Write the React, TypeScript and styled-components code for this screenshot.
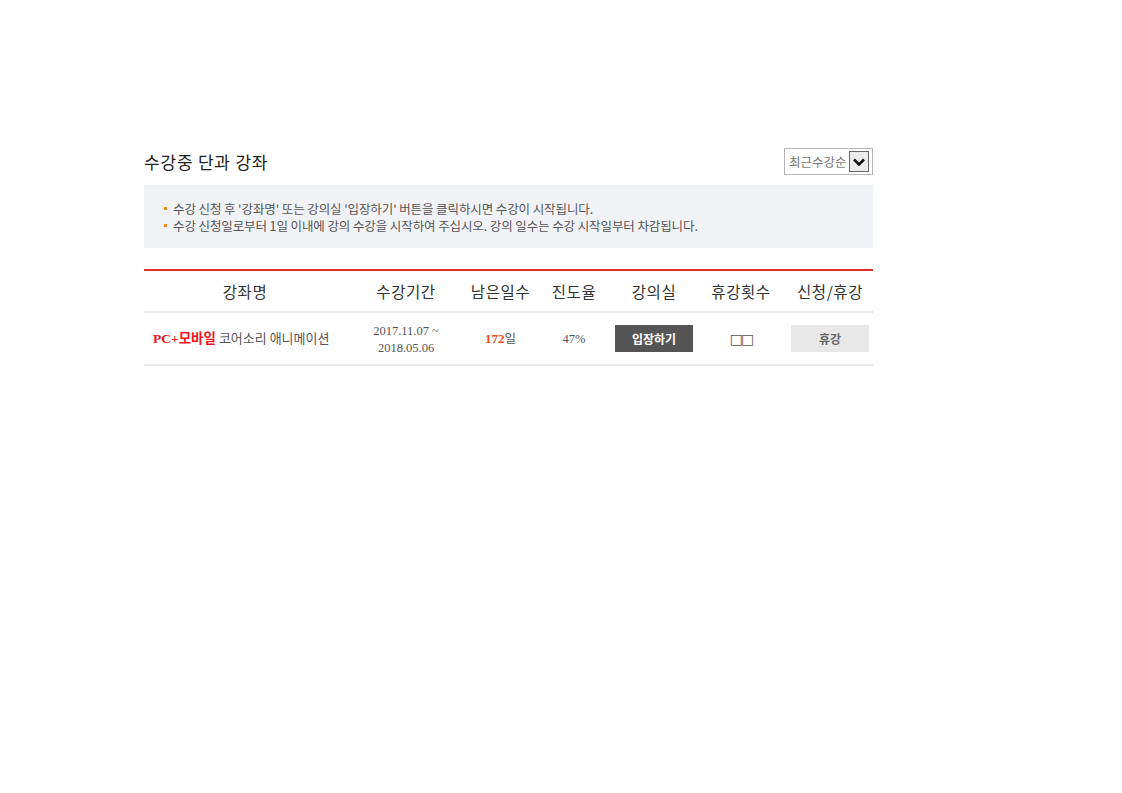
import { createGlobalStyle, styled } from "styled-components";

const GlobalStyle = createGlobalStyle`
  html, body {
    margin: 0;
    padding: 0;
    background: #fff;
  }
  body {
    font-family: "Noto Sans CJK KR", "Noto Sans", sans-serif;
  }
`;

type Course = {
  device: string;
  title: string;
  start: string;
  end: string;
  daysLeft: number;
  progress: string;
};

const courses: Course[] = [
  {
    device: "PC+모바일",
    title: "코어소리 애니메이션",
    start: "2017.11.07 ~",
    end: "2018.05.06",
    daysLeft: 172,
    progress: "47%",
  },
];

const columns = [
  { label: "강좌명", width: 202 },
  { label: "수강기간", width: 120 },
  { label: "남은일수", width: 69 },
  { label: "진도율", width: 78 },
  { label: "강의실", width: 82 },
  { label: "휴강횟수", width: 92 },
  { label: "신청/휴강", width: 86 },
];

export default function App() {
  return (
    <>
      <GlobalStyle />
      <Page>
        <TitleBar>
          <Title>수강중 단과 강좌</Title>
          <SortSelect>
            <SortLabel>최근수강순</SortLabel>
            <SortArrow>
              <svg width="14" height="10" viewBox="0 0 14 10">
                <path
                  d="M2 2.5 L7 7.5 L12 2.5"
                  fill="none"
                  stroke="#111"
                  strokeWidth="2.6"
                />
              </svg>
            </SortArrow>
          </SortSelect>
        </TitleBar>
        <Notice>
          <NoticeItem>수강 신청 후 '강좌명' 또는 강의실 '입장하기' 버튼을 클릭하시면 수강이 시작됩니다.</NoticeItem>
          <NoticeItem>수강 신청일로부터 1일 이내에 강의 수강을 시작하여 주십시오. 강의 일수는 수강 시작일부터 차감됩니다.</NoticeItem>
        </Notice>
        <Table>
          <colgroup>
            {columns.map((c) => (
              <col key={c.label} style={{ width: c.width }} />
            ))}
          </colgroup>
          <thead>
            <tr>
              {columns.map((c) => (
                <HeadCell key={c.label}>{c.label}</HeadCell>
              ))}
            </tr>
          </thead>
          <tbody>
            {courses.map((course) => (
              <tr key={course.title}>
                <NameCell>
                  <Device>{course.device}</Device> {course.title}
                </NameCell>
                <Cell>
                  <SerifText>
                    {course.start}
                    <br />
                    {course.end}
                  </SerifText>
                </Cell>
                <Cell>
                  <DaysLeft>{course.daysLeft}</DaysLeft>
                  <DayUnit>일</DayUnit>
                </Cell>
                <Cell>
                  <SerifText>{course.progress}</SerifText>
                </Cell>
                <Cell>
                  <EnterButton>입장하기</EnterButton>
                </Cell>
                <Cell>
                  <Missing>□□</Missing>
                </Cell>
                <Cell>
                  <PauseButton>휴강</PauseButton>
                </Cell>
              </tr>
            ))}
          </tbody>
        </Table>
      </Page>
    </>
  );
}

const Page = styled.div`
  width: 729px;
  margin-left: 144px;
  padding-top: 148px;
`;

const TitleBar = styled.div`
  display: flex;
  align-items: center;
  justify-content: space-between;
  height: 27px;
`;

const Title = styled.h2`
  margin: 0;
  font-size: 17px;
  font-weight: 400;
  color: #222;
  letter-spacing: 0.8px;
`;

const SortSelect = styled.div`
  display: flex;
  align-items: center;
  box-sizing: border-box;
  width: 89px;
  height: 27px;
  border: 1px solid #b5b5b5;
  padding: 0 1px 0 4px;
  gap: 2px;
`;

const SortLabel = styled.span`
  font-size: 12.5px;
  color: #777;
  white-space: nowrap;
`;

const SortArrow = styled.span`
  display: flex;
  align-items: center;
  justify-content: center;
  box-sizing: border-box;
  width: 20px;
  height: 21px;
  border: 1px solid #666;
  background: #ececec;
`;

const Notice = styled.ul`
  list-style: none;
  margin: 10px 0 0;
  padding: 15px 0 12px 19px;
  background: #f1f2f5;
  height: 63px;
  box-sizing: border-box;
`;

const NoticeItem = styled.li`
  position: relative;
  padding-left: 10px;
  font-size: 12.5px;
  line-height: 17px;
  color: #555;
  letter-spacing: -0.1px;

  &::before {
    content: "";
    position: absolute;
    left: 1px;
    top: 7px;
    width: 3px;
    height: 3px;
    background: #f08c1c;
  }
`;

const Table = styled.table`
  width: 729px;
  margin-top: 21px;
  border-collapse: collapse;
  table-layout: fixed;
  border-top: 2px solid #e42a2e;
`;

const HeadCell = styled.th`
  height: 40px;
  padding: 0;
  font-size: 15.5px;
  font-weight: 400;
  color: #333;
  text-align: center;
  border-bottom: 2px solid #e8e8e8;
  letter-spacing: 0.6px;
`;

const Cell = styled.td`
  height: 51px;
  padding: 0;
  text-align: center;
  vertical-align: middle;
  border-bottom: 2px solid #e8e8e8;
  font-size: 12.5px;
  line-height: 16px;
`;

const NameCell = styled(Cell)`
  text-align: left;
  padding-left: 9px;
  font-size: 13px;
  color: #555;
`;

const Device = styled.span`
  font-family: "Liberation Serif", "Noto Sans CJK KR", serif;
  font-weight: 700;
  color: #f0141e;
  font-size: 13.5px;
`;

const SerifText = styled.span`
  font-family: "Liberation Serif", serif;
  font-size: 12.5px;
  color: #555;
`;

const DaysLeft = styled.span`
  font-family: "Liberation Serif", serif;
  font-weight: 700;
  font-size: 13px;
  color: #f04a1e;
`;

const DayUnit = styled.span`
  font-size: 12.5px;
  color: #555;
`;

const ActionButton = styled.button`
  display: inline-flex;
  align-items: center;
  justify-content: center;
  vertical-align: middle;
  width: 78px;
  height: 27px;
  padding: 0;
  border: none;
  font-family: "Noto Sans CJK KR", sans-serif;
  font-size: 12px;
  font-weight: 700;
  cursor: pointer;
`;

const EnterButton = styled(ActionButton)`
  background: #555;
  color: #fff;
`;

const PauseButton = styled(ActionButton)`
  background: #e8e8e8;
  color: #666;
`;

const Missing = styled.span`
  font-family: "DejaVu Sans", sans-serif;
  font-size: 14px;
  color: #555;
  letter-spacing: -2px;
`;
